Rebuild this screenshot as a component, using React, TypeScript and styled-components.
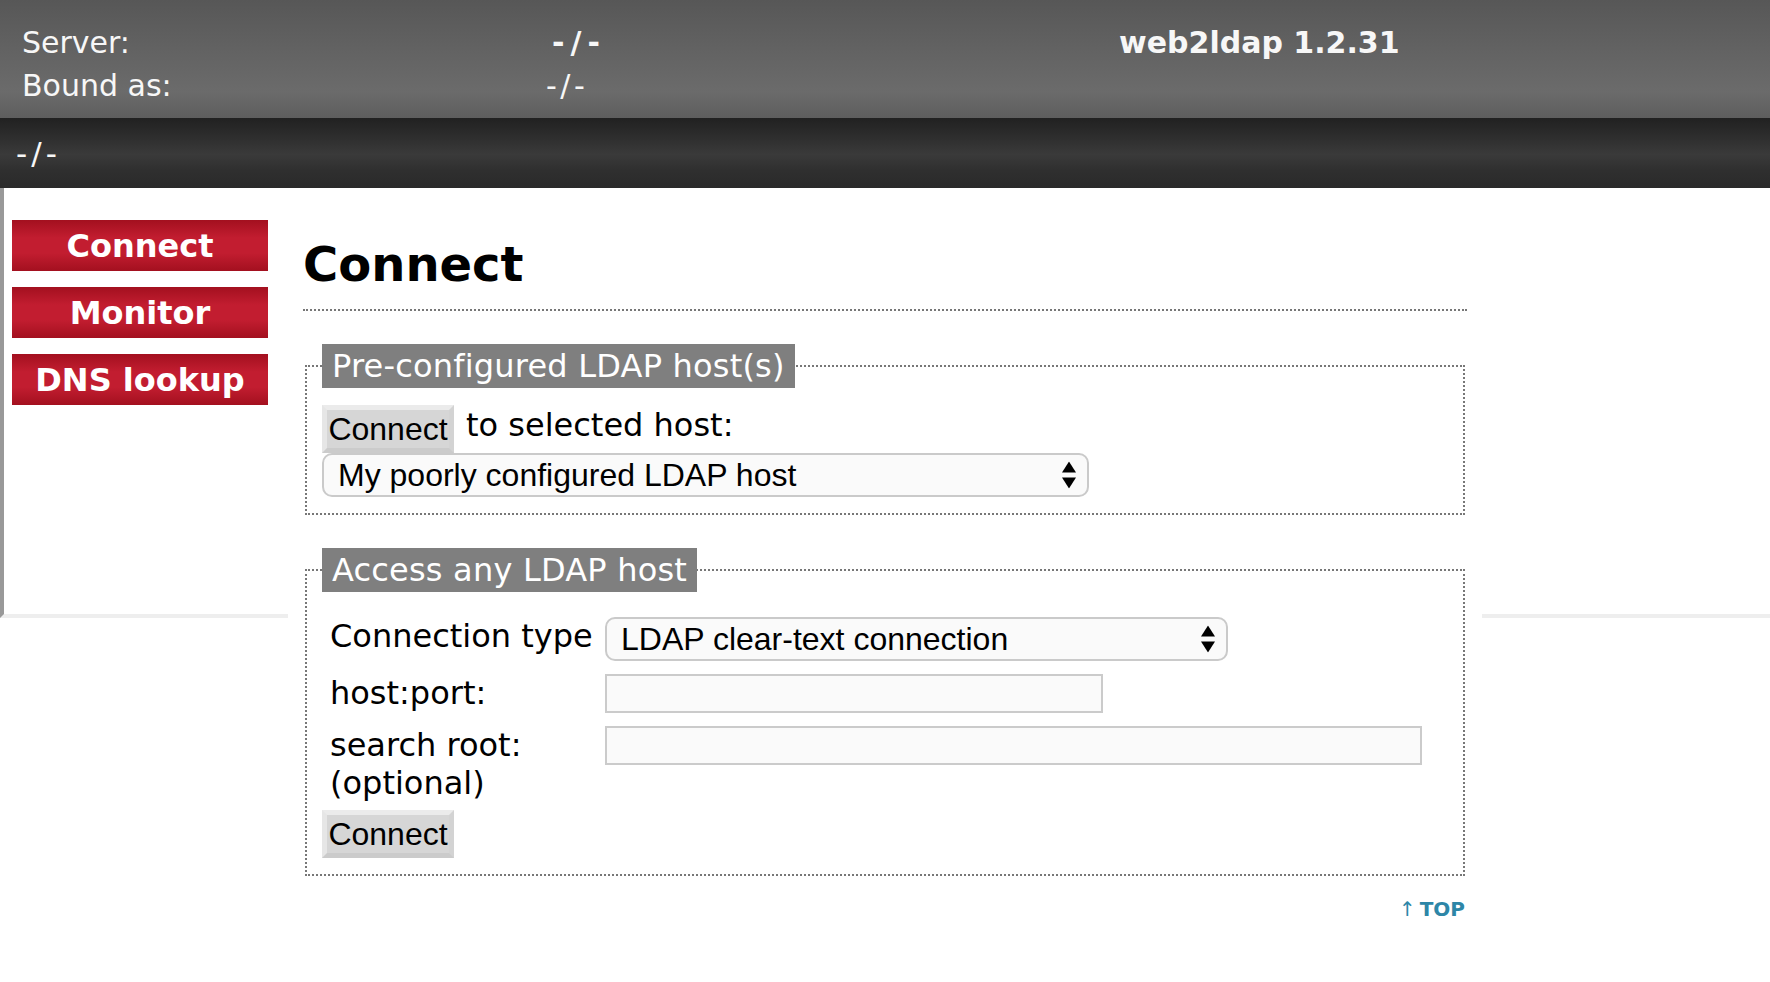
import styled, { createGlobalStyle } from "styled-components";

const GlobalStyle = createGlobalStyle`
  html, body {
    margin: 0;
    padding: 0;
    background: #fff;
  }
  body {
    font-family: "DejaVu Sans", Verdana, sans-serif;
    color: #000;
  }
`;

const TopBar = styled.header`
  height: 118px;
  box-sizing: border-box;
  padding: 25px 20px 0 22px;
  background: linear-gradient(to bottom, #575757 0%, #636363 45%, #6b6b6b 78%, #5e5e5e 100%);
  color: #f7f7f7;
  font-size: 30px;
`;

const InfoGrid = styled.div`
  display: grid;
  grid-template-columns: 524px 573px 1fr;
  row-gap: 8px;
  line-height: normal;
`;

// the "-/-" placeholders are set wider, as in the original font
const InfoValue = styled.div<{ $bold?: boolean }>`
  font-weight: ${(p) => (p.$bold ? 700 : 400)};
  padding-left: ${(p) => (p.$bold ? 6 : 0)}px;
  letter-spacing: ${(p) => (p.$bold ? 6 : 3.5)}px;
`;

const AppTitle = styled.div`
  font-weight: 700;
`;

const DnBar = styled.div`
  height: 70px;
  display: flex;
  align-items: center;
  padding: 0 16px;
  background: linear-gradient(to bottom, #212121 0%, #2f2f2f 30%, #3a3a3a 52%, #2f2f2f 75%, #2a2a2a 100%);
  color: #f7f7f7;
  font-size: 31px;
  letter-spacing: 4px;
`;

const Body = styled.div`
  display: grid;
  grid-template-columns: 288px 1194px 1fr;
  align-items: start;
`;

const Nav = styled.nav`
  height: 430px;
  box-sizing: border-box;
  border-left: 4px solid #999;
  border-bottom: 4px solid #eee;
  padding: 32px 0 0 8px;
  display: flex;
  flex-direction: column;
  gap: 16px;
`;

const NavButton = styled.a`
  display: flex;
  align-items: center;
  justify-content: center;
  width: 256px;
  height: 51px;
  background: linear-gradient(to bottom, #a3101f 0%, #c21d30 35%, #c21d30 65%, #a3101f 100%);
  color: #fff;
  font-size: 32px;
  font-weight: 700;
  text-decoration: none;
`;

const Main = styled.main`
  padding: 0 15px 40px;
  background: #fff;
`;

const Title = styled.h1`
  margin: 48px 0 0;
  padding-bottom: 17px;
  border-bottom: 2px dotted #777;
  font-size: 48px;
  font-weight: 700;
  line-height: normal;
`;

const Box = styled.fieldset`
  margin: 33px 2px 0;
  padding: 17px 15px 16px;
  border: 2px dotted #777;
  min-width: 0;
`;

const BoxTitle = styled.legend`
  padding: 3px 10px;
  background: #7f7f7f;
  color: #fff;
  font-size: 32px;
  line-height: normal;
  letter-spacing: 0.2px;
`;

const ConnectRow = styled.div`
  display: flex;
  align-items: flex-start;
  gap: 12px;
`;

const RowText = styled.span`
  margin-top: 1px;
  font-size: 32px;
  line-height: normal;
`;

const FormButton = styled.button`
  display: block;
  box-sizing: border-box;
  width: 132px;
  height: 48px;
  margin: 0;
  padding: 0;
  border: 5px solid;
  border-color: #ebebeb #d3d3d3 #cbcbcb #e6e6e6;
  background: #d6d6d6;
  color: #000;
  font-family: "Liberation Sans", Arial, sans-serif;
  font-size: 32px;
  line-height: 1;
  cursor: pointer;
`;

const SelectWrap = styled.div<{ $w: number }>`
  position: relative;
  width: ${(p) => p.$w}px;
`;

const Select = styled.select`
  display: block;
  width: 100%;
  height: 44px;
  box-sizing: border-box;
  margin: 0;
  padding: 0 44px 0 14px;
  appearance: none;
  -webkit-appearance: none;
  border: 2px solid #cacaca;
  border-radius: 10px;
  background: #fafafa;
  color: #000;
  font-family: "Liberation Sans", Arial, sans-serif;
  font-size: 32px;
`;

const Arrows = styled.svg`
  position: absolute;
  right: 13px;
  top: 50%;
  transform: translateY(-50%);
  width: 14px;
  height: 27px;
  pointer-events: none;
`;

const FormGrid = styled.div`
  display: grid;
  grid-template-columns: 283px auto;
  justify-content: start;
  align-items: start;
  row-gap: 13px;
  margin: 8px 0 8px;
`;

const FieldLabel = styled.label`
  padding-left: 8px;
  font-size: 32px;
  line-height: normal;
`;

const TextInput = styled.input<{ $w: number }>`
  display: block;
  width: ${(p) => p.$w}px;
  height: 39px;
  box-sizing: border-box;
  margin: 0;
  padding: 0 8px;
  border: 2px solid #cbcbcb;
  background: #fafafa;
  font-family: "Liberation Sans", Arial, sans-serif;
  font-size: 28px;
`;

const TopRow = styled.div`
  margin: 21px 2px 0;
  text-align: right;
`;

const TopLink = styled.a`
  color: #2d86a7;
  font-size: 20px;
  font-weight: 700;
  text-decoration: none;
`;

const UpArrow = styled.span`
  font-weight: 400;
  margin-right: 4px;
`;

const RightPad = styled.div`
  height: 430px;
  box-sizing: border-box;
  border-bottom: 4px solid #eee;
`;

const SelectArrows = () => (
  <Arrows viewBox="0 0 14 27">
    <polygon points="0,11 7,0 14,11" fill="#000" />
    <polygon points="0,16 14,16 7,27" fill="#000" />
  </Arrows>
);

export default function App() {
  return (
    <>
      <GlobalStyle />
      <TopBar>
        <InfoGrid>
          <div>Server:</div>
          <InfoValue $bold>-/-</InfoValue>
          <AppTitle>web2ldap 1.2.31</AppTitle>
          <div>Bound as:</div>
          <InfoValue>-/-</InfoValue>
          <div />
        </InfoGrid>
      </TopBar>
      <DnBar>-/-</DnBar>
      <Body>
        <Nav>
          <NavButton href="#">Connect</NavButton>
          <NavButton href="#">Monitor</NavButton>
          <NavButton href="#">DNS lookup</NavButton>
        </Nav>
        <Main>
          <Title>Connect</Title>
          <Box>
            <BoxTitle>Pre-configured LDAP host(s)</BoxTitle>
            <ConnectRow>
              <FormButton type="button">Connect</FormButton>
              <RowText>to selected host:</RowText>
            </ConnectRow>
            <SelectWrap $w={767}>
              <Select defaultValue="poor">
                <option value="poor">My poorly configured LDAP host</option>
              </Select>
              <SelectArrows />
            </SelectWrap>
          </Box>
          <Box>
            <BoxTitle>Access any LDAP host</BoxTitle>
            <FormGrid>
              <FieldLabel>Connection type</FieldLabel>
              <SelectWrap $w={623}>
                <Select defaultValue="ldap">
                  <option value="ldap">LDAP clear-text connection</option>
                </Select>
                <SelectArrows />
              </SelectWrap>
              <FieldLabel>host:port:</FieldLabel>
              <TextInput $w={498} />
              <FieldLabel>
                search root:
                <br />
                (optional)
              </FieldLabel>
              <TextInput $w={817} />
            </FormGrid>
            <FormButton type="button">Connect</FormButton>
          </Box>
          <TopRow>
            <TopLink href="#">
              <UpArrow>↑</UpArrow>TOP
            </TopLink>
          </TopRow>
        </Main>
        <RightPad />
      </Body>
    </>
  );
}
